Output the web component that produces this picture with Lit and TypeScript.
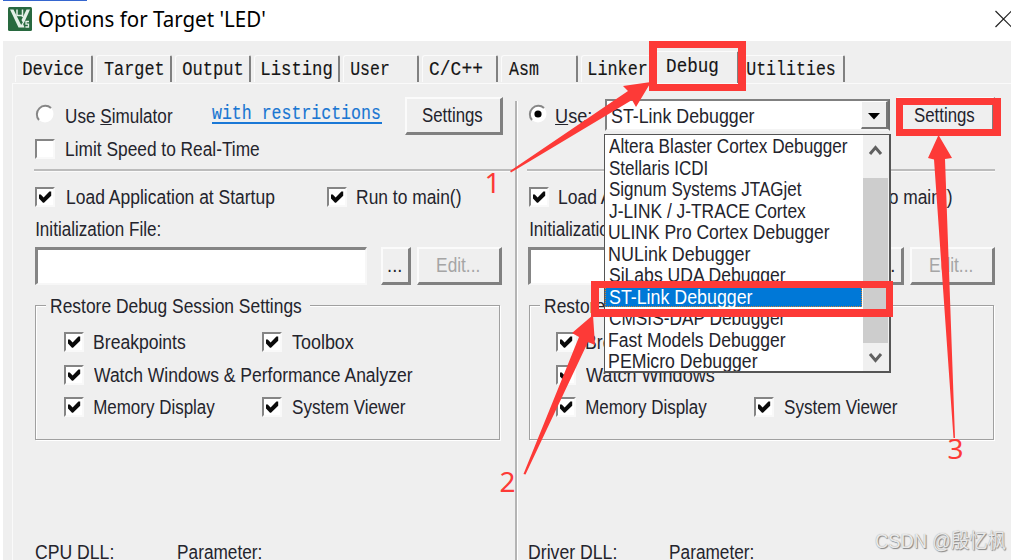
import { LitElement, html, css, svg, nothing } from "lit";
import { customElement, property } from "lit/decorators.js";
import { classMap } from "lit/directives/class-map.js";

/** A single line of text whose ink is condensed or stretched to a given width. */
@customElement("fit-label")
class FitLabel extends LitElement {
  @property({ type: Number }) w = 100;
  static styles = css`
    :host { display: block; white-space: pre; overflow: visible; }
    .ink { display: inline-block; transform-origin: 0 50%; margin-right: -400px; }
  `;
  firstUpdated() {
    const ink = this.renderRoot.querySelector(".ink") as HTMLElement;
    const cs = getComputedStyle(this);
    const ctx = document.createElement("canvas").getContext("2d")!;
    ctx.font = `${cs.fontWeight} ${cs.fontSize} ${cs.fontFamily}`;
    const m = ctx.measureText((this.textContent || "").trim());
    const k = this.w / (m.actualBoundingBoxLeft + m.actualBoundingBoxRight);
    ink.style.transform = `translateX(${m.actualBoundingBoxLeft * k}px) scaleX(${k})`;
  }
  render() {
    return html`<span class="ink"><slot></slot></span>`;
  }
}

@customElement("check-box")
class CheckBox extends LitElement {
  @property({ type: Boolean }) checked = false;
  static styles = css`
    :host { display: block; width: 20px; height: 20px; }
    .box {
      box-sizing: border-box; width: 20px; height: 20px; background: #fff;
      border: 2px solid; border-color: #858585 #f9f9f9 #f9f9f9 #858585;
    }
    svg { display: block; }
  `;
  render() {
    return html`<div class="box">${this.checked
      ? html`<svg width="16" height="16" viewBox="0 0 16 16"><path d="M2 5.4 L3.8 5.4 L6.6 8.4 L12.4 2.6 L14.2 2.6 V6.8 L7 13.8 L6 13.8 L2 9.6 Z" fill="#0a0a0a"/></svg>`
      : nothing}</div>`;
  }
}

interface Side {
  right: boolean;
  dll: string;
  dllWidth: number;
  watch: string;
  watchWidth: number;
}

const TABS: [string, number, string][] = [
  ["Device", 60, "t1"], ["Target", 59, "t2"], ["Output", 59, "t3"], ["Listing", 70, "t4"],
  ["User", 38, "t5"], ["C/C++", 52, "t6"], ["Asm", 29, "t7"], ["Linker", 58, "t8"],
  ["Debug", 51, "t9 active"], ["Utilities", 88, "t10"],
];

const DRIVERS: [string, number][] = [
  ["Altera Blaster Cortex Debugger", 239], ["Stellaris ICDI", 98], ["Signum Systems JTAGjet", 193],
  ["J-LINK / J-TRACE Cortex", 197], ["ULINK Pro Cortex Debugger", 221], ["NULink Debugger", 142],
  ["SiLabs UDA Debugger", 178], ["ST-Link Debugger", 144], ["CMSIS-DAP Debugger", 177],
  ["Fast Models Debugger", 177], ["PEMicro Debugger", 149],
];

@customElement("app-root")
class AppRoot extends LitElement {
  static styles = css`
    :host {
      display: block; position: relative; width: 1011px; height: 560px; overflow: hidden;
      background: #fff; color: #24242c;
      font: 19.5px/22px "Liberation Sans", Arial, sans-serif;
    }
    .accent { width: 84px; height: 1px; margin-left: 3px; background: #3566cf; }
    .title {
      display: grid; grid-template-columns: 31px 956px 16px; height: 36px; padding: 0 0 4px 8px;
      align-items: center; color: #000; font: 21.5px/30px "Noto Sans", "Open Sans", sans-serif;
    }
    .body { margin-left: 3px; height: 519px; background: #efefef; }
    .tabs { display: flex; height: 42px; padding-left: 12px; align-items: flex-end; }
    .tab {
      box-sizing: border-box; height: 27px; margin: 0 3px 1px 0; padding: 2px 0 0 7px;
      border: solid; border-width: 1px 2px 0 1px; border-color: #fbfbfb #808080 #fbfbfb #fbfbfb;
      border-radius: 3px 2px 0 0; color: #151515; -webkit-text-stroke: 0.15px #151515;
      font: 20px/24px "Liberation Mono", "Courier New", monospace;
    }
    .t1 { width: 78px; } .t2, .t3, .t5, .t6 { width: 76px; } .t4 { width: 86px; }
    .t7 { width: 77px; } .t8 { width: 74px; margin-right: 0; }
    .t9 { width: 84px; padding-left: 11px; margin-right: 5px; }
    .t10 { width: 101px; padding-left: 2px; margin-right: 0; }
    .active { height: 32px; padding-top: 3px; margin-bottom: 0; }
    .page {
      display: flex; box-sizing: border-box; margin-left: 9px; height: 477px; padding: 13px 0 0 22px;
      border: solid #fafafa; border-width: 1px 0 0 1px;
    }
    .divider {
      box-sizing: border-box; width: 3px; height: 463px; margin: 4px 9px 0 12px; background: #b4b4b4;
      border-right: 1px solid #fff; flex: none;
    }
    .col { width: 468px; flex: none; }
    .use { display: grid; grid-template-columns: 31px 146px 193px 98px; height: 37px; align-items: center; }
    .right .use { grid-template-columns: 29px 49px 292px 98px; }
    .right .radio { margin-left: 1px; }
    .radio { margin-bottom: 5px; }
    svg { display: block; }
    .link {
      width: 170px; height: 19px; margin-bottom: 5px; border-bottom: 2px solid #1a78d6; color: #1976d2;
      font: 20px/21px "Liberation Mono", "Courier New", monospace; -webkit-text-stroke: 0.15px #1976d2;
    }
    .btn {
      box-sizing: border-box; height: 38px; background: #efefef; padding-top: 5px;
      border: solid; border-width: 2px 3px 3px 2px; border-color: #fbfbfb #808080 #808080 #fbfbfb;
    }
    .settings { padding-left: 15px; }
    .combo {
      display: grid; grid-template-columns: 4px 250px 26px; box-sizing: border-box; width: 285px; height: 32px;
      margin-bottom: 2px; background: #fff; border: 2px solid; border-color: #808080 #707070 #f4f4f4 #808080;
      align-items: center;
    }
    .combo fit-label { padding-top: 1px; }
    .drop {
      box-sizing: border-box; height: 28px; width: 27px; background: #efefef; padding: 10px 0 0 5px;
      border: solid; border-width: 1px 2px 2px 1px; border-color: #fff #777 #777 #fff;
    }
    .limit { display: grid; grid-template-columns: 31px 1fr; height: 30px; align-items: center; }
    .rule {
      box-sizing: border-box; width: 479px; height: 3px; margin: 5px 0 0 -1px;
      background: #bcbcbc; border-bottom: 1px solid #fafafa;
    }
    .right .rule { width: 468px; margin-left: 0; }
    .load { display: grid; grid-template-columns: 32px 260px 30px 1fr; height: 50px; align-items: center; }
    .right .load, .right .limit, .right .init, .right .dlls { padding-left: 2px; }
    .right .load { grid-template-columns: 30px 259px 30px 1fr; }
    .init { height: 22px; margin-top: -4px; }
    .init fit-label { margin-left: 1px; }
    .file { display: grid; grid-template-columns: 332px 30px 84px; column-gap: 14px; height: 38px; margin-top: 7px; }
    .file .edit { margin-left: -8px; padding-left: 18px; color: #a5a5a5; width: 85px; }
    .right .file { padding-left: 1px; }
    .browse { padding-left: 5px; }
    .input {
      box-sizing: border-box; background: #fff; border: solid; border-width: 3px 2px 2px 3px;
      border-color: #858585 #f7f7f7 #f7f7f7 #858585;
    }
    .group {
      box-sizing: border-box; width: 465px; height: 135px; margin-top: 20px; padding-left: 28px;
      border: 1px solid #a0a0a0; box-shadow: 1px 1px 0 #fff, inset 1px 1px 0 #fff;
    }
    .right .group { margin-left: 2px; padding-left: 26px; }
    .legend { width: 259px; height: 20px; margin: -10px 0 0 -18px; padding-left: 5px; background: #efefef; line-height: 21px; }
    .right .legend { margin-left: -16px; }
    .opt { display: grid; grid-template-columns: 30px 168px 30px 1fr; height: 32.5px; align-items: center; }
    .opts { padding-top: 10px; }
    .dlls { display: grid; grid-template-columns: 143px 1fr; margin-top: 101px; line-height: 22px; }
    .right .dlls { grid-template-columns: 141px 1fr; }
    .menu {
      position: absolute; left: 604px; top: 134px; width: 287px; height: 239px; box-sizing: border-box;
      display: grid; grid-template-columns: 257px 28px; background: #fff; border: 1px solid #555;
      border-width: 1px 2px 2px 1px; overflow: hidden;
    }
    .item { height: 21.5px; padding-left: 4px; line-height: 22px; }
    .sel { background: #0078d7; color: #fff; outline: 1px dotted #d08030; outline-offset: -1px; }
    .scroll { display: grid; grid-template-rows: 43px 165px 28px; background: #f0f0f0; margin-left: 1px; }
    .thumb { background: #cdcdcd; width: 25px; }
    .marks { position: absolute; left: 0; top: 0; }
    .water {
      position: absolute; left: 876px; top: 529px; color: #e9e9e9;
      text-shadow: 1px 1px 1px #858585, 0 0 1px #a0a0a0;
      font: 20px/25px "Liberation Sans", "Noto Sans CJK SC", sans-serif;
    }
  `;

  private radio(on: boolean) {
    return html`<svg class="radio" width="20" height="20" viewBox="0 0 20 20">
      <circle cx="10" cy="10" r="8.5" fill="#fff"/>
      <path d="M4 16 A8.5 8.5 0 0 1 16 4" fill="none" stroke="#868686" stroke-width="2"/>
      ${on ? svg`<circle cx="10" cy="10" r="3.6" fill="#000"/>` : nothing}
    </svg>`;
  }

  private column(s: Side) {
    return html`<div class=${classMap({ col: true, right: s.right })}>
      <div class="use">
        ${this.radio(s.right)}
        ${s.right
          ? html`<fit-label w="35"><u>U</u>se:</fit-label>
              <div class="combo"><span></span><fit-label w="144">ST-Link Debugger</fit-label>
                <div class="drop"><svg width="14" height="8"><path d="M1 1H13L7 7.5Z" fill="#000"/></svg></div></div>`
          : html`<fit-label w="107">Use <u>S</u>imulator</fit-label>
              <div class="link"><fit-label w="168">with restrictions</fit-label></div>`}
        <div class="btn settings"><fit-label w="61">Settings</fit-label></div>
      </div>
      <div class="limit">${s.right ? nothing : html`<check-box></check-box><fit-label w="193">Limit Speed to Real-Time</fit-label>`}</div>
      <div class="rule"></div>
      <div class="load">
        <check-box checked></check-box><fit-label w="209">Load Application at Startup</fit-label>
        ${s.right ? html`<span></span>` : html`<check-box checked></check-box>`}<fit-label w="104">Run to main()</fit-label>
      </div>
      <div class="init"><fit-label w="124">Initialization File:</fit-label></div>
      <div class="file">
        <div class="input"></div>
        <div class="btn browse"><fit-label w="13">...</fit-label></div>
        <div class="btn edit"><fit-label w="42">Edit...</fit-label></div>
      </div>
      <div class="group">
        <div class="legend"><fit-label w="251">Restore Debug Session Settings</fit-label></div>
        <div class="opts">
          <div class="opt"><check-box checked></check-box><fit-label w="92">Breakpoints</fit-label><check-box checked></check-box><fit-label w="62">Toolbox</fit-label></div>
          <div class="opt"><check-box checked></check-box><fit-label w=${s.watchWidth}>${s.watch}</fit-label></div>
          <div class="opt"><check-box checked></check-box><fit-label w="121">Memory Display</fit-label><check-box checked></check-box><fit-label w="114">System Viewer</fit-label></div>
        </div>
      </div>
      <div class="dlls"><fit-label w=${s.dllWidth}>${s.dll}</fit-label><fit-label w="83">Parameter:</fit-label></div>
    </div>`;
  }

  render() {
    return html`
      <div class="accent"></div>
      <div class="title">
        <svg width="24" height="24" viewBox="0 0 24 24">
          <rect width="24" height="24" rx="1.5" fill="#28693f"/>
          <path d="M2 2.5H5.5L13.2 18L14.5 15.5L16.5 20.5H10.5Z" fill="#e4efe7"/>
          <path d="M22 2.5H18.5L13.5 13L15.5 17Z" fill="#e4efe7"/>
          <path d="M9 2.5V8.5H14.5M14.5 2.5V10" stroke="#e4efe7" stroke-width="1.5" fill="none"/>
          <path d="M21 14.5H18V17.2H20.5V20H17.4" stroke="#e4efe7" stroke-width="1.3" fill="none"/>
        </svg>
        <fit-label w="226">Options for Target 'LED'</fit-label>
        <svg width="17" height="18" viewBox="0 0 17 18"><path d="M0.5 1L16.5 17M16.5 1L0.5 17" stroke="#222" stroke-width="1.2"/></svg>
      </div>
      <div class="body">
        <div class="tabs">${TABS.map(([name, w, cls]) => html`<div class="tab ${cls}"><fit-label w=${w}>${name}</fit-label></div>`)}</div>
        <div class="page">
          ${this.column({ right: false, dll: "CPU DLL:", dllWidth: 78, watch: "Watch Windows & Performance Analyzer", watchWidth: 320 })}
          <div class="divider"></div>
          ${this.column({ right: true, dll: "Driver DLL:", dllWidth: 87, watch: "Watch Windows", watchWidth: 129 })}
        </div>
      </div>
      <div class="menu">
        <div>${DRIVERS.map(([name, w], i) => html`<div class=${classMap({ item: true, sel: i === 7 })}><fit-label w=${w}>${name}</fit-label></div>`)}</div>
        <div class="scroll">
          <svg width="25" height="28"><path d="M7 19L12.5 12.5L18 19" fill="none" stroke="#606060" stroke-width="3"/></svg>
          <div class="thumb"></div>
          <svg width="25" height="28"><path d="M7 11L12.5 17.5L18 11" fill="none" stroke="#606060" stroke-width="3"/></svg>
        </div>
      </div>
      <div class="water"><fit-label w="130">CSDN @殷忆枫</fit-label></div>
      <svg class="marks" width="1011" height="560" viewBox="0 0 1011 560" font-family="Noto Sans, sans-serif" font-size="28" fill="#fd3a37">
        <path fill-rule="evenodd" d="M649 41H746V91H649Z M657 48V84H738V48Z"/>
        <path fill-rule="evenodd" d="M896 98H1001V136H896Z M903 105V129H993V105Z"/>
        <path fill-rule="evenodd" d="M591 281H893V317H591Z M599 288V309H886V288Z"/>
        <path d="M510 171L628 91L623 86L651 82L636 107L632 100L511 172.5Z"/>
        <path d="M523.5 474L579 337L572 333L593 315L595 345L588 342L525.5 474.5Z"/>
        <path d="M938.5 135L952 158L945 159L955 438H953.5L934 159.5L928 158Z"/>
        <text x="484.5" y="193">1</text>
        <text x="499.5" y="491.5">2</text>
        <text x="947.5" y="459">3</text>
      </svg>`;
  }
}
